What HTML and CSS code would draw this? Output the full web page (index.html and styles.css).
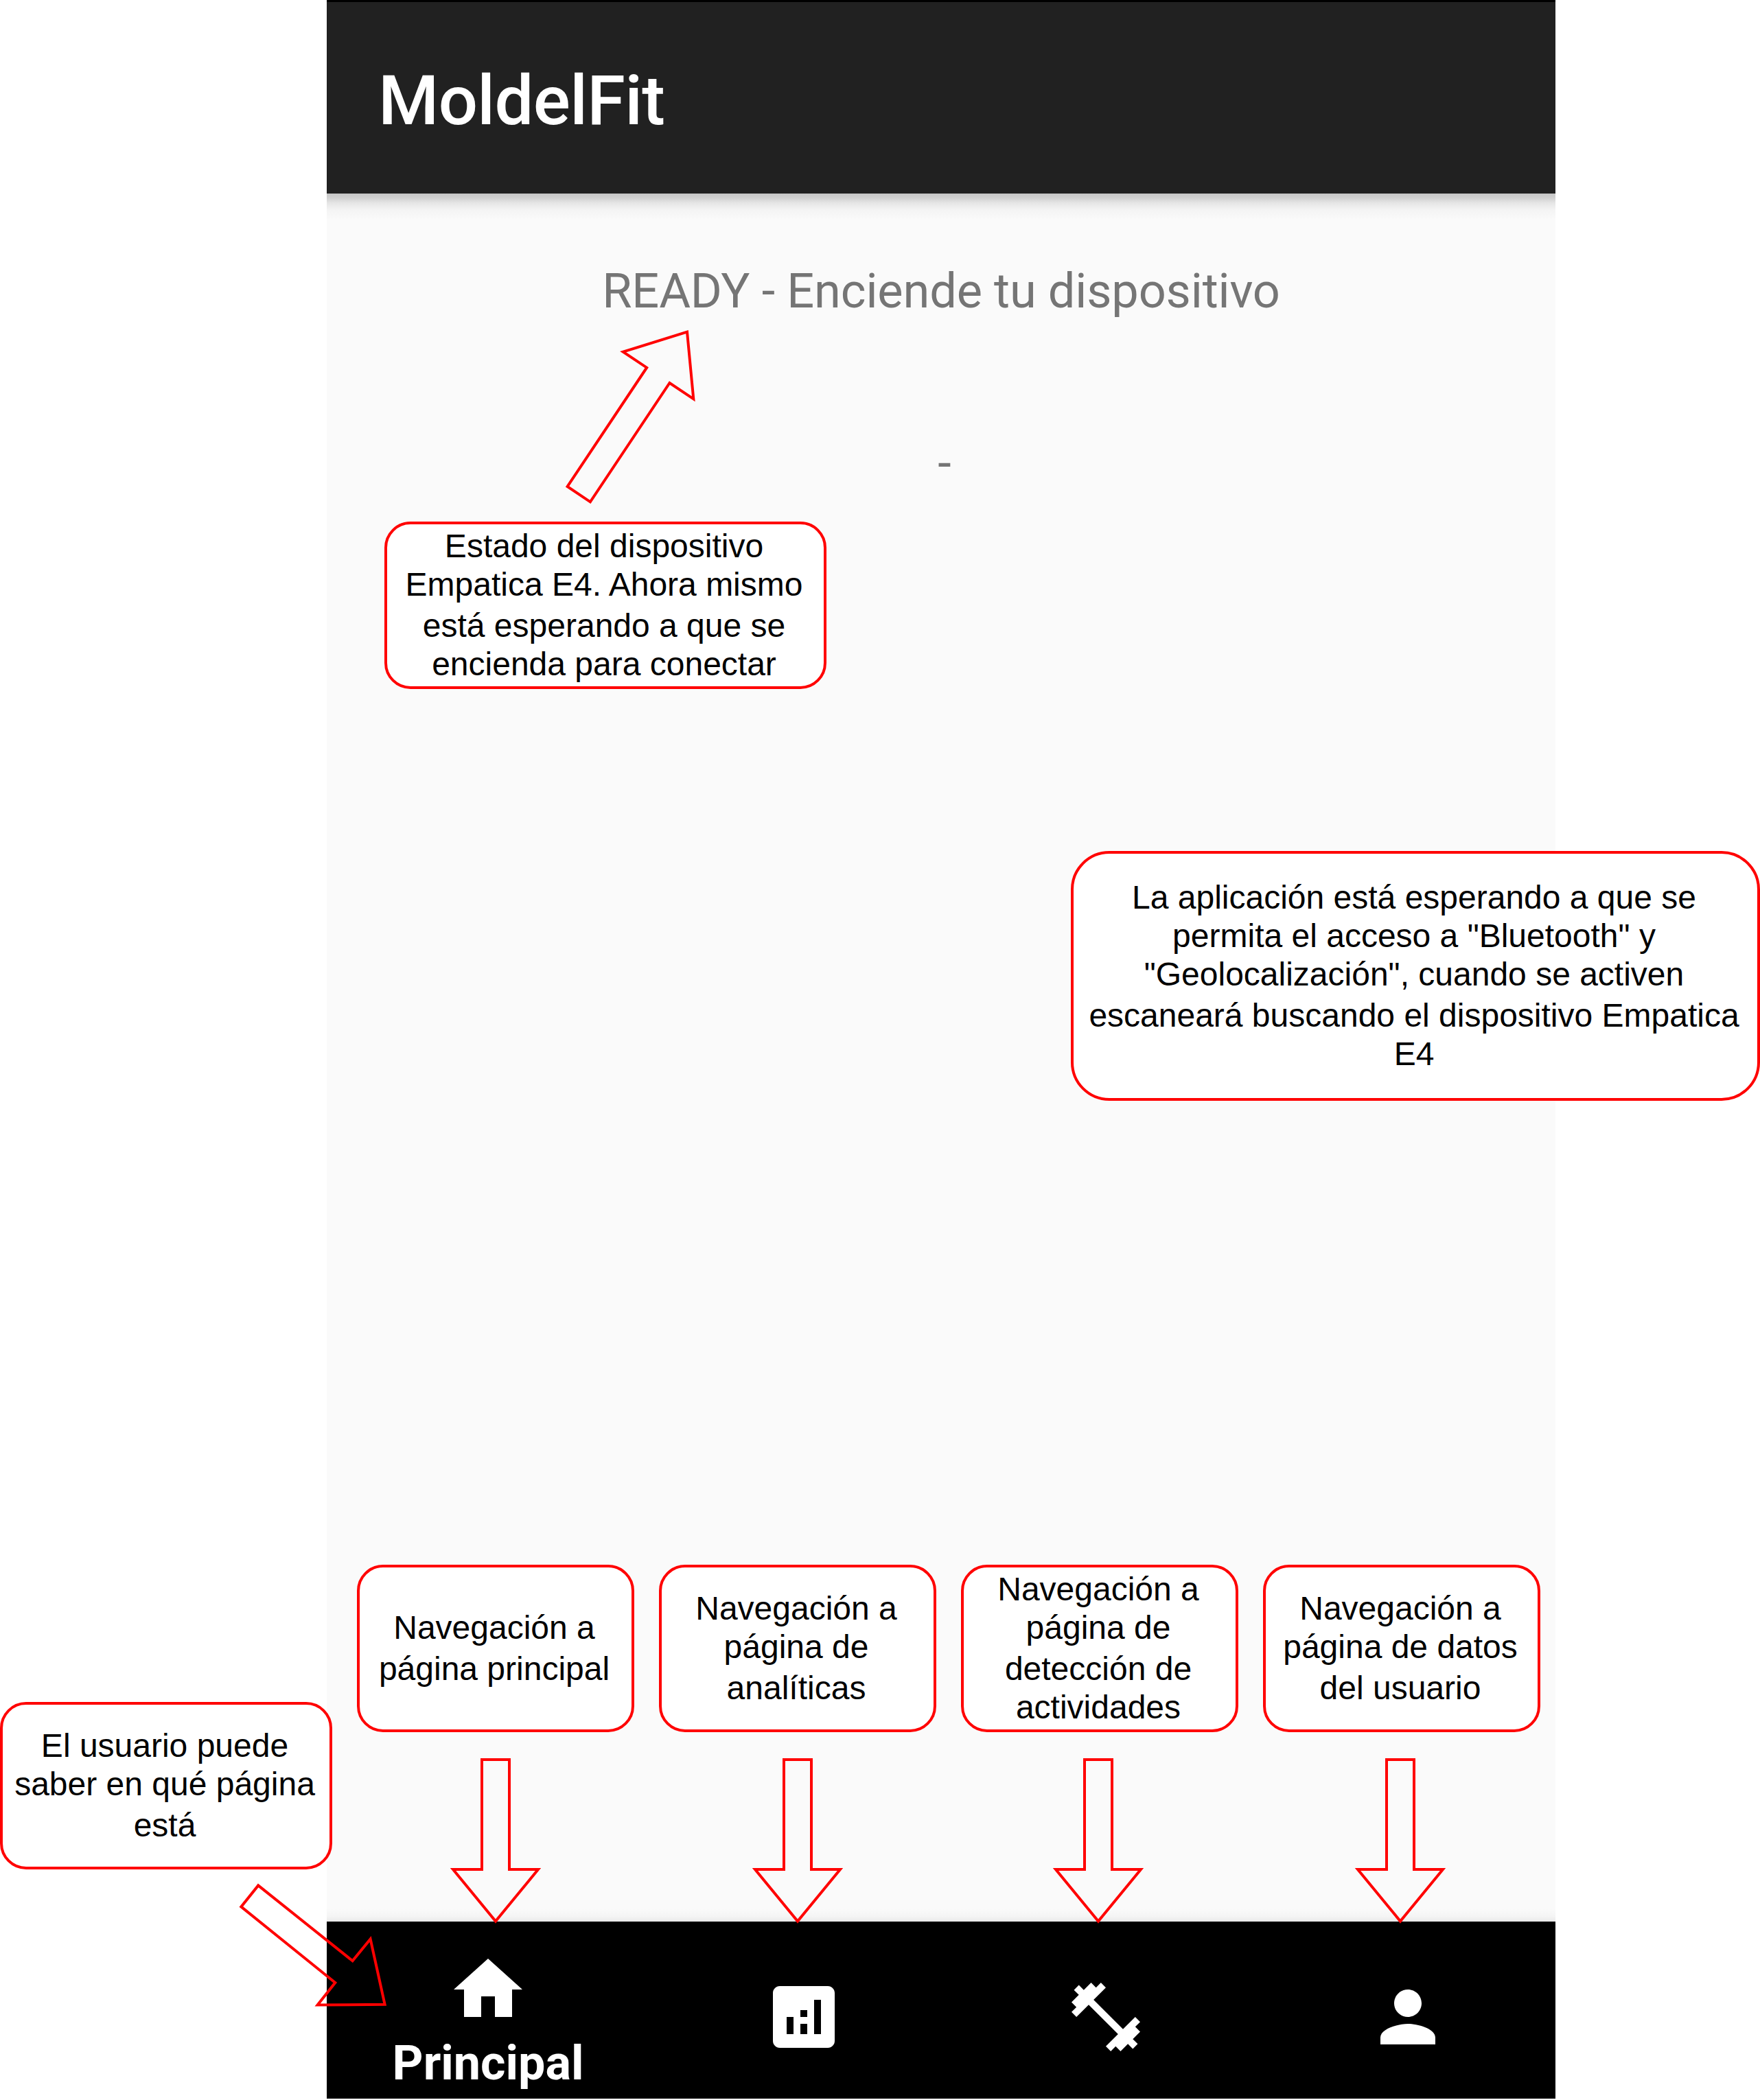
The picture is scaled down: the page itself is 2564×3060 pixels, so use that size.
FILE: index.html
```html
<!DOCTYPE html>
<html lang="es">
<head>
<meta charset="utf-8">
<title>MoldelFit</title>
<link rel="stylesheet" href="styles.css">
</head>
<body>
<div class="board">
  <main class="phone">
    <header class="app-bar"><h1 class="app-title">MoldelFit</h1></header>
    <section class="content">
      <p class="status">READY - Enciende tu dispositivo</p>
      <p class="device">-</p>
    </section>
    <nav class="bottom-nav">
      <a class="tab tab-active">
        <svg class="icon" viewBox="0 0 24 24"><path d="M10 20v-6h4v6h5v-8h3L12 3 2 12h3v8z"/></svg>
        <span class="tab-label">Principal</span>
      </a>
      <a class="tab"><svg class="icon" viewBox="0 0 24 24"><path fill-rule="evenodd" d="M19 3H5c-1.100 0-2 .9-2 2v14c0 1.100.9 2 2 2h14c1.100 0 2-.9 2-2V5c0-1.100-.9-2-2-2zM9 17H7v-5h2zM13 17h-2v-3h2zM13 12h-2v-2h2zM17 17h-2V7h2z"/></svg></a>
      <a class="tab"><svg class="icon" viewBox="0 0 24 24"><path d="M20.570 14.860L22 13.430 20.570 12 17 15.570 8.430 7 12 3.430 10.570 2 9.140 3.430 7.710 2 5.570 4.140 4.140 2.710 2.710 4.140l1.430 1.430L2 7.710l1.430 1.430L2 10.570 3.430 12 7 8.430 15.570 17 12 20.570 13.430 22l1.430-1.430L16.290 22l2.140-2.140 1.430 1.430 1.430-1.430-1.430-1.430L22 16.290z"/></svg></a>
      <a class="tab"><svg class="icon" viewBox="0 0 24 24"><path d="M12 12c2.210 0 4-1.790 4-4s-1.790-4-4-4-4 1.790-4 4 1.790 4 4 4zm0 2c-2.670 0-8 1.340-8 4v2h16v-2c0-2.660-5.330-4-8-4z"/></svg></a>
    </nav>
  </main>

  <aside class="note note-status"><span>Estado del dispositivo</span><span>Empatica E4. Ahora mismo</span><span class="wide">está esperando a que se</span><span>encienda para conectar</span></aside>
  <aside class="note note-waiting"><span>La aplicación está esperando a que se</span><span>permita el acceso a "Bluetooth" y</span><span>"Geolocalización", cuando se activen</span><span class="wide">escaneará buscando el dispositivo Empatica</span><span>E4</span></aside>
  <div class="nav-notes">
    <aside class="note"><span>Navegación a</span><span class="wide">página principal</span></aside>
    <aside class="note"><span>Navegación a</span><span>página de</span><span class="wide">analíticas</span></aside>
    <aside class="note"><span>Navegación a</span><span>página de</span><span class="wide">detección de</span><span>actividades</span></aside>
    <aside class="note"><span>Navegación a</span><span>página de datos</span><span class="wide">del usuario</span></aside>
  </div>
  <aside class="note note-current"><span>El usuario puede</span><span>saber en qué página</span><span class="wide">está</span></aside>

  <svg class="arrows" viewBox="0 0 2564 3060">
    <path d="M1001 483.700L907.700 512.700 942.200 535.700 826.600 709 859.900 731.300 975.500 558 1010.300 581.300z"/>
    <path d="M560.600 2920.800L539.600 2825.500 513.600 2857.200 376.200 2747.400 351.300 2778.400 488.300 2889 462.600 2921.500z"/>
    <path d="M702 2564H742V2724H784L722 2799.500 660 2724H702z"/>
    <path d="M1142 2564H1182V2724H1224L1162 2799.500 1100 2724H1142z"/>
    <path d="M1580 2564H1620V2724H1662L1600 2799.500 1538 2724H1580z"/>
    <path d="M2020 2564H2060V2724H2102L2040 2799.500 1978 2724H2020z"/>
  </svg>
</div>
</body>
</html>
```
FILE: styles.css
```css
* { box-sizing: border-box; }

body { margin: 0; background: #fff; }
h1, p { margin: 0; }

.board {
  position: relative;
  width: 2564px;
  height: 3060px;
  overflow: hidden;
}

/* app screen */
.phone {
  display: flex;
  flex-direction: column;
  width: 1790px;
  height: 3057.500px;
  margin-left: 476px;
  background: #fafafa;
  font-family: Roboto, "Liberation Sans", sans-serif;
}

.app-bar {
  display: flex;
  align-items: center;
  height: 282px;
  padding: 8px 0 0 75px;
  border-top: 3px solid #000;
  background: #212121;
}

.app-title {
  color: #fff;
  font-size: 101px;
  font-weight: 500;
  letter-spacing: -0.650px;
  line-height: 120px;
}

.content {
  flex: 1;
  padding-top: 101px;
  background:
    linear-gradient(#c6c6c6, #d0d0d0 6px, #e6e6e6 14px, #f4f4f4 24px, #fafafa 38px) top / 100% 38px no-repeat,
    linear-gradient(#fafafa, #f4f4f4 60%, #e9e9e9) bottom / 100% 18px no-repeat,
    #fafafa;
  color: #757575;
  font-size: 70.300px;
  letter-spacing: -0.150px;
  line-height: 82px;
  text-align: center;
}

.device { margin-top: 169px; padding-left: 10px; }

.bottom-nav {
  display: flex;
  justify-content: center;
  height: 258px;
  overflow: hidden;
  background: #000;
  color: #fff;
}

.tab {
  display: flex;
  flex: 0 0 440px;
  flex-direction: column;
  align-items: center;
  padding-top: 79.500px;
}

.tab-active { flex-basis: 480px; padding-top: 39.500px; }

.icon { flex: none; width: 120px; height: 120px; fill: #fff; }

.tab-label {
  margin-top: 6px;
  font-size: 70px;
  font-weight: 700;
  line-height: 82px;
}

/* callouts laid over the screen */
.note {
  display: flex;
  flex-direction: column;
  justify-content: center;
  height: 244px;
  padding-right: 4px;
  border: 4px solid #f00;
  border-radius: 38px;
  background: #fff;
  color: #000;
  font: 48px/56px "Liberation Sans", Arial, sans-serif;
  text-align: center;
  white-space: nowrap;
}

.note .wide { margin-top: 4px; }

.note-status { position: absolute; left: 560px; top: 760px; width: 644px; }
.note-waiting { position: absolute; left: 1560px; top: 1240px; width: 1004px; height: 364px; border-radius: 56px; }
.note-current { position: absolute; left: 0; top: 2480px; width: 484px; }

.nav-notes {
  position: absolute;
  left: 520px;
  top: 2280px;
  display: grid;
  grid-template-columns: repeat(4, 404px);
  gap: 36px;
}

.arrows {
  position: absolute;
  inset: 0;
  width: 2564px;
  height: 3060px;
  fill: none;
  stroke: #f00;
  stroke-width: 4;
  stroke-miterlimit: 10;
}
```
